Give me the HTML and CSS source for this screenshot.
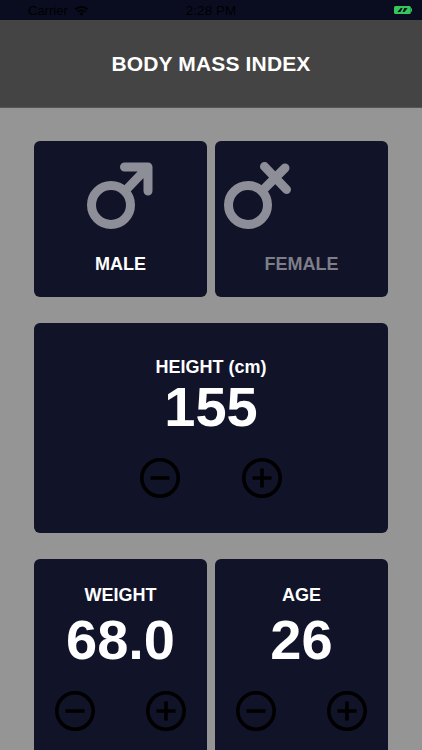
FILE: index.html
```html
<!DOCTYPE html>
<html>
<head>
    <title>Body Mass Index</title>
    <link rel="stylesheet" href="styles.css">
</head>
<body>
    <div class="status-bar">
        <div class="status-left">
            <span>Carrier</span>
            <svg class="wifi" width="15" height="11" viewBox="0 0 16 12">
                <path d="M0.6 4.2 A10.6 10.6 0 0 1 15.4 4.2 L14 5.7 A8.6 8.6 0 0 0 2 5.7 Z"/>
                <path d="M3.1 6.8 A7 7 0 0 1 12.9 6.8 L11.5 8.2 A5 5 0 0 0 4.5 8.2 Z"/>
                <path d="M5.6 9.3 A3.4 3.4 0 0 1 10.4 9.3 L8 11.8 Z"/>
            </svg>
        </div>
        <span class="status-time">2:28 PM</span>
        <div class="status-right">
            <svg width="18" height="8" viewBox="0 0 18 8">
                <rect x="0" y="0" width="16.8" height="8" rx="1.5" fill="#34c759"/>
                <rect x="17" y="2.4" width="1" height="3.2" fill="#34c759"/>
                <path d="M3.4 6 L6.8 2 H8.6 L6.4 6 Z" fill="#0a0d20"/>
                <path d="M10.4 2 H13.6 L10.4 6 H8.6 Z" fill="#0a0d20"/>
            </svg>
        </div>
    </div>

    <header class="app-bar">BODY MASS INDEX</header>

    <main class="content">
        <div class="row gender-row">
            <div class="card gender-card">
                <svg class="gender-icon" viewBox="0 0 173 76">
                    <circle cx="77" cy="46" r="19.5"/>
                    <path d="M91 32 L114 8 M90.5 8 H114 V32"/>
                </svg>
                <div class="gender-label">MALE</div>
            </div>
            <div class="card gender-card">
                <svg class="gender-icon" viewBox="0 0 173 76">
                    <circle cx="33" cy="46" r="19.5"/>
                    <path d="M47 32 L70 9 M49.5 7.5 L71.5 30.5"/>
                </svg>
                <div class="gender-label inactive">FEMALE</div>
            </div>
        </div>

        <div class="card stat-card height-card">
            <div class="stat-label">HEIGHT (cm)</div>
            <div class="stat-value">155</div>
            <div class="stepper wide">
                <svg class="step-btn" viewBox="0 0 40 40"><circle cx="20" cy="20" r="18.2"/><path d="M10.5 20 H29.5"/></svg>
                <svg class="step-btn" viewBox="0 0 40 40"><circle cx="20" cy="20" r="18.2"/><path d="M10.5 20 H29.5 M20 10.5 V29.5"/></svg>
            </div>
        </div>

        <div class="row">
            <div class="card stat-card">
                <div class="stat-label">WEIGHT</div>
                <div class="stat-value low">68.0</div>
                <div class="stepper">
                    <svg class="step-btn" viewBox="0 0 40 40"><circle cx="20" cy="20" r="18.2"/><path d="M10.5 20 H29.5"/></svg>
                    <svg class="step-btn" viewBox="0 0 40 40"><circle cx="20" cy="20" r="18.2"/><path d="M10.5 20 H29.5 M20 10.5 V29.5"/></svg>
                </div>
            </div>
            <div class="card stat-card">
                <div class="stat-label">AGE</div>
                <div class="stat-value low">26</div>
                <div class="stepper">
                    <svg class="step-btn" viewBox="0 0 40 40"><circle cx="20" cy="20" r="18.2"/><path d="M10.5 20 H29.5"/></svg>
                    <svg class="step-btn" viewBox="0 0 40 40"><circle cx="20" cy="20" r="18.2"/><path d="M10.5 20 H29.5 M20 10.5 V29.5"/></svg>
                </div>
            </div>
        </div>
    </main>
</body>
</html>
```

FILE: styles.css
```css
* { box-sizing: border-box; }
html, body { margin: 0; height: 750px; overflow: hidden; }
body { background: #959595; font-family: "Liberation Sans", Arial, sans-serif; color: white; }

.status-bar { height: 20px; background: #0a0d20; color: #000; font-size: 13px; display: flex; align-items: center; justify-content: space-between; padding: 0 10px 0 28px; position: relative; }
.status-left { display: flex; align-items: center; gap: 6px; }
.status-right { display: flex; align-items: center; }
.status-right svg { display: block; }
.status-time { position: absolute; left: 0; right: 0; text-align: center; font-size: 13.5px; }
.wifi { fill: #000; }

.app-bar { height: 88px; background: #444; border-bottom: 1px solid #555; display: flex; align-items: center; justify-content: center; font-size: 21px; letter-spacing: 0.15px; font-weight: bold; padding-top: 1px; }

.content { padding: 33px 34px 0; display: flex; flex-direction: column; gap: 26px; }
.row { display: flex; gap: 8px; }
.card { background: #111328; border-radius: 6px; flex: 1; }

.gender-row { height: 156px; }
.gender-card { padding-top: 18px; }
.gender-icon { display: block; width: 173px; height: 76px; fill: none; stroke: #8d8e98; stroke-width: 9; stroke-linecap: round; stroke-linejoin: round; }
.gender-label { margin-top: 18px; text-align: center; font-size: 18px; line-height: 22px; font-weight: bold; }
.gender-label.inactive { color: #7d7e88; }

.stat-card { height: 210px; flex: 1; padding-top: 25px; text-align: center; }
.height-card { flex: none; padding-top: 33px; }
.stat-label { font-size: 18px; line-height: 22px; font-weight: bold; }
.stat-value { font-size: 56px; line-height: 60px; font-weight: bold; margin-top: -1px; }
.stat-value.low { margin-top: 4px; }
.stepper { display: flex; justify-content: space-between; padding: 0 21px 0 20.5px; margin-top: 21px; }
.stepper.wide { justify-content: center; gap: 62px; padding: 0; }
.step-btn { width: 40px; height: 40px; fill: none; stroke: #000; stroke-width: 3.6; }
```
